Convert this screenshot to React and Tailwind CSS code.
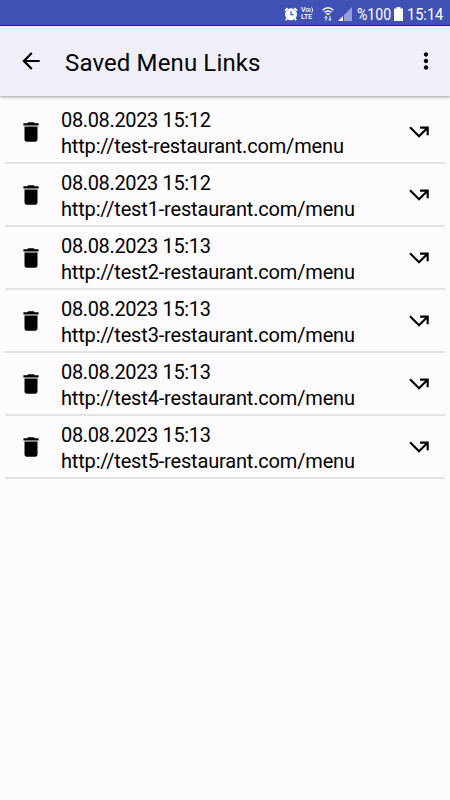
const links = [
  { date: "08.08.2023 15:12", url: "http://test-restaurant.com/menu" },
  { date: "08.08.2023 15:12", url: "http://test1-restaurant.com/menu" },
  { date: "08.08.2023 15:13", url: "http://test2-restaurant.com/menu" },
  { date: "08.08.2023 15:13", url: "http://test3-restaurant.com/menu" },
  { date: "08.08.2023 15:13", url: "http://test4-restaurant.com/menu" },
  { date: "08.08.2023 15:13", url: "http://test5-restaurant.com/menu" },
];

const icons = {
  back: "M20 11H7.83l5.59-5.59L12 4l-8 8 8 8 1.41-1.41L7.83 13H20v-2z",
  more: "M12 8c1.1 0 2-.9 2-2s-.9-2-2-2-2 .9-2 2 .9 2 2 2zm0 2c-1.1 0-2 .9-2 2s.9 2 2 2 2-.9 2-2-.9-2-2-2zm0 6c-1.1 0-2 .9-2 2s.9 2 2 2 2-.9 2-2-.9-2-2-2z",
  trash: "M6 19c0 1.1.9 2 2 2h8c1.1 0 2-.9 2-2V7H6v12zM19 4h-3.5l-1-1h-5l-1 1H5v2h14V4z",
  open: "M3 8.41l9 9 7-7V15h2V7h-8v2h4.59L12 14.59 4.41 7 3 8.41z",
};

function Icon({ name }) {
  return (
    <svg viewBox="0 0 24 24" fill="currentColor" className="h-[26px] w-[26px] shrink-0">
      <path d={icons[name]} />
    </svg>
  );
}

function StatusBar() {
  return (
    <div className="flex h-[26px] items-center justify-end border-b border-[#0a2cae] bg-[#3f51b5] pr-[7px] pt-[2px] text-white">
      <svg viewBox="0 0 14 14" className="h-[14px] w-[14px]" fill="none" stroke="currentColor">
        <circle cx="7" cy="7.3" r="5.5" fill="currentColor" />
        <path d="M1 3.6 3.6 1.2M13 3.6l-2.6-2.4M3.2 11.5l-1.4 1.7M10.8 11.5l1.4 1.7" strokeWidth="1.8" />
        <path d="M7 4.2v3.4h2.6" stroke="#3f51b5" strokeWidth="1.2" />
      </svg>
      <div className="ml-[3px] w-[14px] whitespace-nowrap text-[7px] font-medium leading-[8px]">
        <div className="flex h-[7px] items-center">
          Vo
          <svg viewBox="0 0 5 6" className="h-[6px] w-[5px]" fill="none" stroke="currentColor" strokeWidth="0.9">
            <path d="M.7 1q1.3 2 0 4M2.7.3q2 2.7 0 5.4" />
          </svg>
        </div>
        <div className="leading-[8px]">LTE</div>
      </div>
      <svg viewBox="0 0 12 14" className="ml-[7px] h-[14px] w-[12px]" fill="none" stroke="currentColor">
        <path d="M.6 3.2q5.4-4.8 10.8 0M2.5 5.4q3.5-3 7 0M4.3 7.4q1.7-1.4 3.4 0" strokeWidth="1.4" />
        <path d="M4 13.5v-4M2.7 10.8 4 9.4l1.3 1.4M8 9.3v4M6.7 12 8 13.4 9.3 12" strokeWidth="1" />
      </svg>
      <svg viewBox="0 0 14 14" className="ml-[4px] h-[14px] w-[14px]" fill="currentColor">
        <path d="M6 8 14 0v14H6z" opacity=".45" />
        <path d="M0 14l5-5v5z" />
      </svg>
      <span className="ml-[5px] mt-[2px] w-[34px] origin-left scale-x-[0.885] whitespace-nowrap text-[16px] leading-none">%100</span>
      <svg viewBox="0 0 9 14" className="ml-[3px] h-[14px] w-[9px]" fill="currentColor">
        <path d="M2.5 0h4v1.5H9V14H0V1.5h2.5z" />
      </svg>
      <span className="ml-[4px] mt-[2px] w-[36px] origin-left scale-x-[0.91] whitespace-nowrap text-[16px] leading-none">15:14</span>
    </div>
  );
}

function LinkRow({ date, url }) {
  return (
    <li className="flex h-[63px] items-center border-b-2 border-[#e3e3e6] pl-[13px] pr-[13px]">
      <Icon name="trash" />
      <div className="ml-[17px] flex-1 whitespace-nowrap pt-[2px] text-[20px] leading-[26px]">
        <p className="tracking-[-0.35px]">{date}</p>
        <p className="tracking-[-0.17px]">{url}</p>
      </div>
      <Icon name="open" />
    </li>
  );
}

export default function App() {
  return (
    <div className="h-[800px] w-[450px] overflow-hidden bg-[#fefbff] font-['Roboto',sans-serif] text-black">
      <StatusBar />
      <header className="flex h-[70px] items-center bg-[#f0eef9] pl-[18px] pr-[11px] shadow-[0_1px_3px_rgba(0,0,0,0.4)]">
        <Icon name="back" />
        <h1 className="ml-[21px] flex-1 pt-[3px] text-[24px] tracking-[0.13px]">Saved Menu Links</h1>
        <Icon name="more" />
      </header>
      <ul className="mx-[5px] mt-[5px]">
        {links.map((link) => (
          <LinkRow key={link.url} {...link} />
        ))}
      </ul>
    </div>
  );
}
